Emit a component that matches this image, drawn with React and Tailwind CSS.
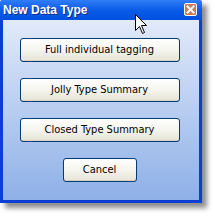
import React from "react";

function XpButton({ children, w }) {
  return (
    <button
      className={`${w} h-[24px] rounded-[3px] border border-[#003c74] bg-gradient-to-b from-[#ffffff] via-[#f5f4ee] to-[#e6e3d6] text-[11px] text-black shadow-[inset_0_-1px_0_#d6d0c5] [font-family:'DejaVu_Sans_Condensed','DejaVu_Sans',sans-serif]`}
    >
      {children}
    </button>
  );
}

export default function App() {
  return (
    <div className="w-[215px] h-[218px] bg-white relative overflow-hidden">
      <div className="w-[202px] h-[203px] flex flex-col shadow-[5px_5px_5px_rgba(0,0,0,0.45)]">
        <div className="h-[20px] flex items-center justify-between pl-[3px] pr-[5px] bg-gradient-to-b from-[#2f7df7] via-[#0a5ce8] to-[#0050e0] rounded-t-[2px]">
          <span className="text-white font-bold text-[12px] leading-none [font-family:'Liberation_Sans',Arial,sans-serif] [text-shadow:1px_1px_0_#0a2a8a]">
            New Data Type
          </span>
          <div className="w-[13px] h-[13px] border border-white rounded-[2px] bg-[#c87a5e] flex items-center justify-center mt-[-1px]">
            <svg width="9" height="9" viewBox="0 0 9 9">
              <path d="M1.5 1.5 L7.5 7.5 M7.5 1.5 L1.5 7.5" stroke="white" strokeWidth="2" strokeLinecap="square" />
            </svg>
          </div>
        </div>
        <div className="flex-1 border-[3px] border-t-0 border-[#0a3fd6] bg-gradient-to-b from-[#e2eaf9] to-[#8eb0e7] flex flex-col items-center pt-[18px] gap-[16px] pr-[3px]">
          <XpButton w="w-[160px]">Full individual tagging</XpButton>
          <XpButton w="w-[160px]">Jolly Type Summary</XpButton>
          <XpButton w="w-[160px]">Closed Type Summary</XpButton>
          <XpButton w="w-[74px]">Cancel</XpButton>
        </div>
      </div>
      <svg className="absolute left-[135px] top-[14px]" width="13" height="21" viewBox="0 0 13 21">
        <path
          d="M0.5 0.5 L0.5 16.5 L4.5 12.5 L7.5 19.5 L9.5 18.5 L6.5 11.5 L11.5 11.5 Z"
          fill="white"
          stroke="black"
          strokeWidth="1"
          strokeLinejoin="miter"
        />
      </svg>
    </div>
  );
}
